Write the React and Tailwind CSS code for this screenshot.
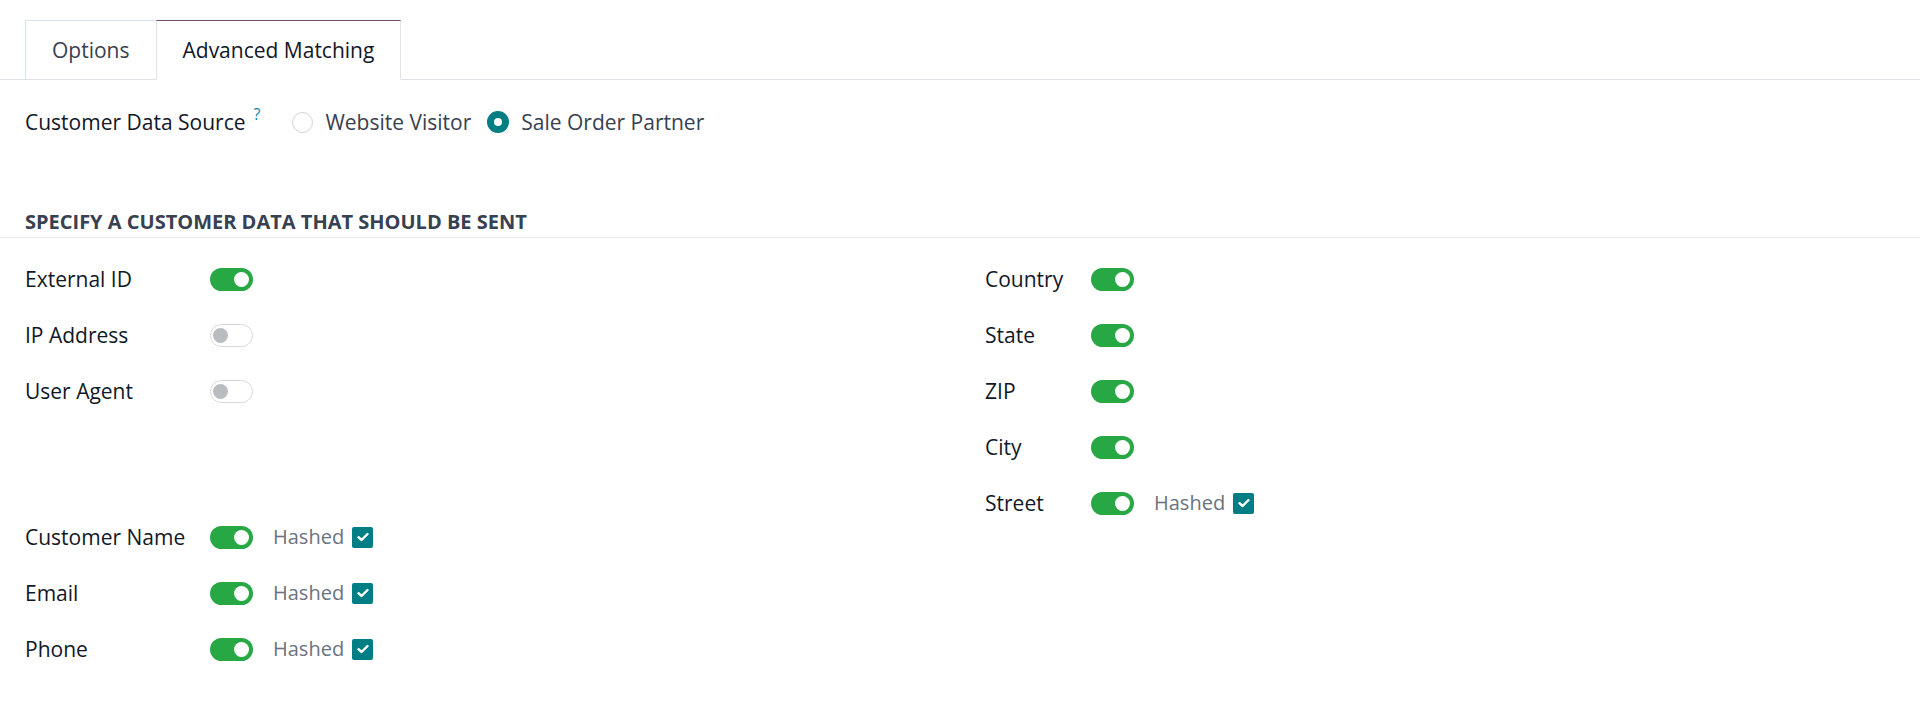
const FONT = { fontFamily: '"Open Sans", "Noto Sans", sans-serif' };

function Toggle({ on }) {
  if (on) {
    return (
      <span className="flex h-[23px] w-[43px] shrink-0 items-center justify-end rounded-full bg-[#28a745] pr-[4px]">
        <span className="h-[15px] w-[15px] rounded-full bg-white" />
      </span>
    );
  }
  return (
    <span className="flex h-[23px] w-[43px] shrink-0 items-center justify-start rounded-full border border-[#d6d9dc] bg-white pl-[2px]">
      <span className="h-[15px] w-[15px] rounded-full bg-[#b9bcc0]" />
    </span>
  );
}

function Check() {
  return (
    <span className="flex h-[21px] w-[21px] items-center justify-center rounded-[2px] bg-[#017e84]">
      <svg width="12" height="10" viewBox="0 0 12 10" fill="none">
        <path d="M1.5 5.2 L4.6 8 L10.5 2" stroke="white" strokeWidth="2.4" strokeLinecap="round" strokeLinejoin="round" />
      </svg>
    </span>
  );
}

function Row({ label, on, hashed, labelWidth }) {
  return (
    <div className="flex h-[34px] items-center">
      <div className={`${labelWidth} shrink-0 font-medium text-[#111827]`}>{label}</div>
      <Toggle on={on} />
      {hashed && (
        <div className="ml-[20px] flex items-center gap-[8px]">
          <span className="text-[20px] text-[#6b7280]">Hashed</span>
          <Check />
        </div>
      )}
    </div>
  );
}

const LEFT_TOP = [
  { label: 'External ID', on: true },
  { label: 'IP Address', on: false },
  { label: 'User Agent', on: false },
];

const LEFT_BOTTOM = [
  { label: 'Customer Name', on: true, hashed: true },
  { label: 'Email', on: true, hashed: true },
  { label: 'Phone', on: true, hashed: true },
];

const RIGHT = [
  { label: 'Country', on: true },
  { label: 'State', on: true },
  { label: 'ZIP', on: true },
  { label: 'City', on: true },
  { label: 'Street', on: true, hashed: true },
];

export default function App() {
  return (
    <div className="h-[714px] w-full bg-white text-[21px] leading-[30px]" style={FONT}>
      {/* Tabs */}
      <div className="flex border-b border-[#dee2e6] pl-[25px] pt-[20px]">
        <div className="flex h-[59px] items-center border-l border-t border-[#d5e3ea] px-[26px] text-[#374151]">
          Options
        </div>
        <div className="-mb-px flex h-[60px] items-center border-x border-t border-b border-x-[#dee2e6] border-t-[#714b67] border-b-white bg-white px-[26px] text-[#111827]">
          Advanced Matching
        </div>
      </div>

      {/* Data source */}
      <div className="mt-[27px] flex h-[30px] items-center pl-[25px]">
        <span className="font-medium text-[#111827]">Customer Data Source</span>
        <span className="relative -top-[8px] ml-[8px] text-[16px] font-medium leading-none text-[#0e84ad]">?</span>
        <span className="ml-[32px] h-[21px] w-[21px] rounded-full border border-[#ced4da] bg-white" />
        <span className="ml-[12px] text-[#374151]">Website Visitor</span>
        <span className="ml-[16px] flex h-[22px] w-[22px] items-center justify-center rounded-full bg-[#017e84]">
          <span className="h-[8px] w-[8px] rounded-full bg-white" />
        </span>
        <span className="ml-[12px] text-[#374151]">Sale Order Partner</span>
      </div>

      {/* Section */}
      <div className="mt-[72px] border-b border-[#e5e7eb] pb-[2px] pl-[25px] text-[20px] font-bold uppercase leading-[26px] text-[#374151]">
        Specify a customer data that should be sent
      </div>

      <div className="mt-[24px] grid grid-cols-2">
        <div className="flex flex-col gap-[22px] pl-[25px]">
          {LEFT_TOP.map((r) => (
            <Row key={r.label} {...r} labelWidth="w-[185px]" />
          ))}
        </div>
        <div className="flex flex-col gap-[22px] pl-[25px]">
          {RIGHT.map((r) => (
            <Row key={r.label} {...r} labelWidth="w-[106px]" />
          ))}
        </div>
      </div>
      <div className="grid grid-cols-2">
        <div className="flex flex-col gap-[22px] pl-[25px]">
          {LEFT_BOTTOM.map((r) => (
            <Row key={r.label} {...r} labelWidth="w-[185px]" />
          ))}
        </div>
      </div>
    </div>
  );
}
